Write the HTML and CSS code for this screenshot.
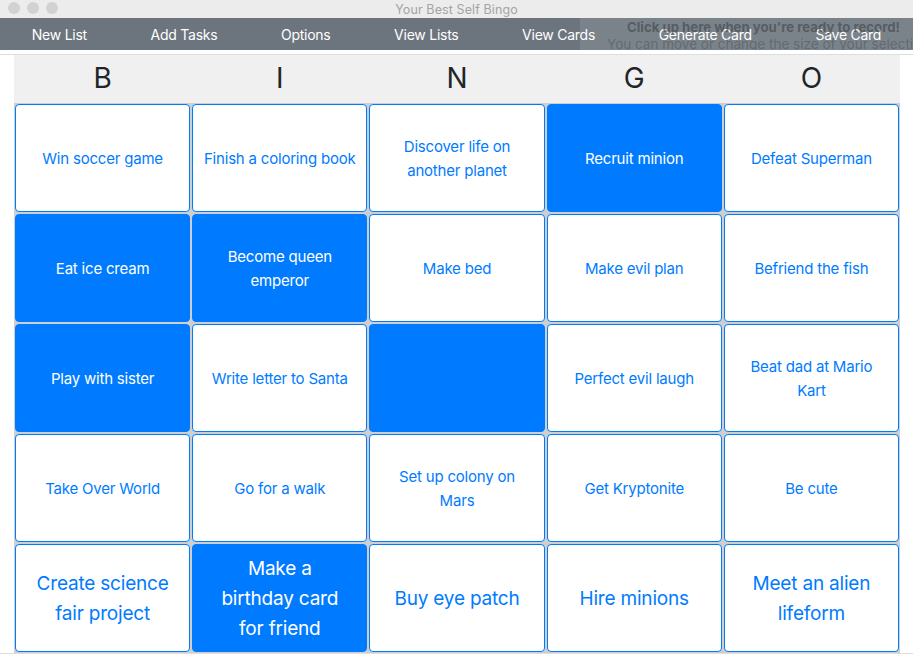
FILE: index.html
```html
<!DOCTYPE html>
<html>
<head>
<meta charset="utf-8">
<title>Your Best Self Bingo</title>
<link rel="stylesheet" href="styles.css">
</head>
<body>
<div class="titlebar">
  <div class="lights"><span class="light"></span><span class="light"></span><span class="light"></span></div>
  <div class="title">Your Best Self Bingo</div>
</div>
<nav class="nav">
  <a class="nav-item">New List</a>
  <a class="nav-item">Add Tasks</a>
  <a class="nav-item">Options</a>
  <a class="nav-item">View Lists</a>
  <a class="nav-item">View Cards</a>
  <a class="nav-item">Generate Card</a>
  <a class="nav-item">Save Card</a>
  <div class="rec-overlay">
    <div class="rec-title">Click up here when you're ready to record!</div>
    <div class="rec-sub">You can move or change the size of your selection</div>
  </div>
</nav>
<main class="page">
  <div class="board">
    <div class="letters">
      <div class="letter">B</div><div class="letter">I</div><div class="letter">N</div><div class="letter">G</div><div class="letter">O</div>
    </div>
    <div class="grid">
      <div class="cell">Win soccer game</div>
      <div class="cell">Finish a coloring book</div>
      <div class="cell">Discover life on<br>another planet</div>
      <div class="cell on">Recruit minion</div>
      <div class="cell">Defeat Superman</div>

      <div class="cell on">Eat ice cream</div>
      <div class="cell on">Become queen<br>emperor</div>
      <div class="cell">Make bed</div>
      <div class="cell">Make evil plan</div>
      <div class="cell">Befriend the fish</div>

      <div class="cell on">Play with sister</div>
      <div class="cell">Write letter to Santa</div>
      <div class="cell on"></div>
      <div class="cell">Perfect evil laugh</div>
      <div class="cell">Beat dad at Mario<br>Kart</div>

      <div class="cell">Take Over World</div>
      <div class="cell">Go for a walk</div>
      <div class="cell">Set up colony on<br>Mars</div>
      <div class="cell">Get Kryptonite</div>
      <div class="cell">Be cute</div>

      <div class="cell big">Create science<br>fair project</div>
      <div class="cell big on">Make a<br>birthday card<br>for friend</div>
      <div class="cell big">Buy eye patch</div>
      <div class="cell big">Hire minions</div>
      <div class="cell big">Meet an alien<br>lifeform</div>
    </div>
  </div>
</main>
</body>
</html>
```
FILE: styles.css
```css
html, body {
  margin: 0;
  padding: 0;
  background: #ffffff;
  font-family: Inter, "Noto Sans", "Liberation Sans", sans-serif;
}

.titlebar {
  height: 18px;
  background: #ececec;
  display: flex;
  align-items: center;
  justify-content: center;
  position: relative;
}

.lights {
  position: absolute;
  left: 8px;
  top: 2px;
  display: flex;
  gap: 7px;
}

.light {
  width: 12px;
  height: 12px;
  border-radius: 50%;
  background: #d2d2d2;
}

.title {
  font-size: 12.5px;
  color: #a4a4a4;
  letter-spacing: 0.1px;
}

.nav {
  height: 32px;
  background: #6c757d;
  display: flex;
  align-items: center;
  justify-content: space-around;
  position: relative;
  overflow: hidden;
}

.nav-item {
  color: #ffffff;
  font-size: 14px;
  letter-spacing: -0.25px;
}

.rec-overlay {
  position: absolute;
  left: 580px;
  top: 0;
  right: 0;
  bottom: 0;
  background: rgba(255, 255, 255, 0.1);
}

.rec-title {
  position: absolute;
  left: 47px;
  top: 1px;
  font-size: 13.2px;
  font-weight: 700;
  color: rgba(60, 66, 72, 0.6);
  white-space: nowrap;
}

.rec-sub {
  position: absolute;
  left: 27px;
  top: 18px;
  font-size: 13.5px;
  color: rgba(60, 66, 72, 0.4);
  white-space: nowrap;
}

.page {
  margin-top: 4px;
  border-top: 1px solid #dedede;
  border-bottom: 1px solid #dedede;
  padding: 0 13px 0 14px;
}

.board {
  background: #f0f0f0;
}

.letters {
  display: grid;
  grid-template-columns: repeat(5, 1fr);
  gap: 2px;
  padding: 0 1px;
  height: 48px;
}

.letter {
  font-size: 28px;
  line-height: 46px;
  text-align: center;
  color: #212529;
}

.grid {
  display: grid;
  grid-template-columns: repeat(5, 1fr);
  grid-auto-rows: 108px;
  gap: 2px;
  padding: 1px;
  background: #cfcfcf;
}

.cell {
  border: 1px solid #007bff;
  border-radius: 4px;
  background: #ffffff;
  color: #007bff;
  display: flex;
  align-items: center;
  justify-content: center;
  text-align: center;
  font-size: 15px;
  line-height: 24px;
  letter-spacing: -0.2px;
  white-space: nowrap;
  padding-top: 2px;
  box-sizing: border-box;
}

.cell.on {
  background: #007bff;
  color: #ffffff;
}

.cell.big {
  font-size: 19px;
  line-height: 30px;
}
```
